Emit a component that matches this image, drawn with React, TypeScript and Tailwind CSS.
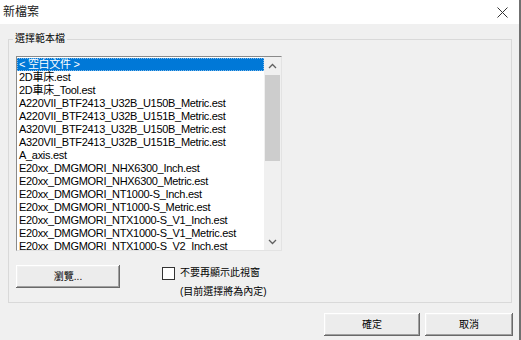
import React from "react";

const files = [
  "2D車床.est",
  "2D車床_Tool.est",
  "A220VII_BTF2413_U32B_U150B_Metric.est",
  "A220VII_BTF2413_U32B_U151B_Metric.est",
  "A320VII_BTF2413_U32B_U150B_Metric.est",
  "A320VII_BTF2413_U32B_U151B_Metric.est",
  "A_axis.est",
  "E20xx_DMGMORI_NHX6300_Inch.est",
  "E20xx_DMGMORI_NHX6300_Metric.est",
  "E20xx_DMGMORI_NT1000-S_Inch.est",
  "E20xx_DMGMORI_NT1000-S_Metric.est",
  "E20xx_DMGMORI_NTX1000-S_V1_Inch.est",
  "E20xx_DMGMORI_NTX1000-S_V1_Metric.est",
  "E20xx_DMGMORI_NTX1000-S_V2_Inch.est",
];

const font = "font-['Liberation_Sans','Noto_Sans_CJK_TC',sans-serif]";
const btn =
  "flex items-center justify-center bg-[#ececec] text-[10px] text-black shadow-[inset_-1px_-1px_#696969,inset_1px_1px_#ffffff,inset_-2px_-2px_#a0a0a0,inset_2px_2px_#f0f0f0]";

const Chevron = ({ up }: { up?: boolean }) => (
  <svg width="9" height="6" viewBox="0 0 9 6">
    <path
      d={up ? "M1 5 L4.5 1.5 L8 5" : "M1 1 L4.5 4.5 L8 1"}
      fill="none"
      stroke="#606060"
      strokeWidth="1.3"
    />
  </svg>
);

export default function App() {
  return (
    <div
      className={`w-[521px] h-[340px] bg-[#f0f0f0] border-r-2 border-[#707070] flex flex-col ${font}`}
    >
      {/* title bar */}
      <div className="h-[24px] bg-white flex items-center justify-between pl-[3px] pr-[11px]">
        <span className="text-[12px] text-[#1a1a1a]">新檔案</span>
        <svg width="11" height="11" viewBox="0 0 11 11">
          <path d="M0.5 0.5 L10.5 10.5 M10.5 0.5 L0.5 10.5" stroke="#333" strokeWidth="1" />
        </svg>
      </div>

      <fieldset className="ml-[8px] mt-[8px] w-[504px] h-[271px] border border-[#d9d9d9] pl-[7px] pt-[10px] m-0">
        <legend className="-ml-[3px] px-[2px] text-[10px] leading-[14px] text-black">選擇範本檔</legend>

        {/* list box */}
        <div className="w-[266px] h-[195px] flex border-t border-l border-[#8a8a8a] border-r border-b border-r-[#e3e3e3] border-b-[#e3e3e3] bg-white">
          <ul className="flex-1 text-[11px] tracking-[-0.3px] leading-[13px] text-black overflow-hidden">
            <li className="bg-[#0078d7] text-white pl-[2px] h-[13px] mt-[0.5px] outline-1 outline-dotted outline-[#7fb8e8] -outline-offset-1">
              &lt; 空白文件 &gt;
            </li>
            {files.map((f) => (
              <li key={f} className="pl-[2px] h-[13px] whitespace-nowrap">
                {f}
              </li>
            ))}
          </ul>
          <div className="w-[17px] flex flex-col bg-[#f0f0f0]">
            <div className="h-[17px] flex items-center justify-center">
              <Chevron up />
            </div>
            <div className="h-[86px] mx-px mt-px bg-[#cdcdcd]" />
            <div className="flex-1" />
            <div className="h-[17px] flex items-center justify-center">
              <Chevron />
            </div>
          </div>
        </div>

        {/* bottom of group */}
        <div className="flex mt-[14px]">
          <button className={`${btn} w-[104px] h-[23px]`}>瀏覽...</button>
          <div className="ml-[42px] mt-[1px] flex flex-col">
            <div className="flex items-center gap-[5px]">
              <span className="w-[13px] h-[13px] border border-[#333] bg-white" />
              <span className="text-[10px] leading-[14px] text-black">不要再顯示此視窗</span>
            </div>
            <span className="ml-[18px] mt-[5px] text-[10px] leading-[14px] text-black">
              (目前選擇將為內定)
            </span>
          </div>
        </div>
      </fieldset>

      {/* dialog buttons */}
      <div className="flex justify-end gap-[5px] mt-[10px] pr-[6px]">
        <button className={`${btn} w-[96px] h-[23px]`}>確定</button>
        <button className={`${btn} w-[88px] h-[23px]`}>取消</button>
      </div>
    </div>
  );
}
